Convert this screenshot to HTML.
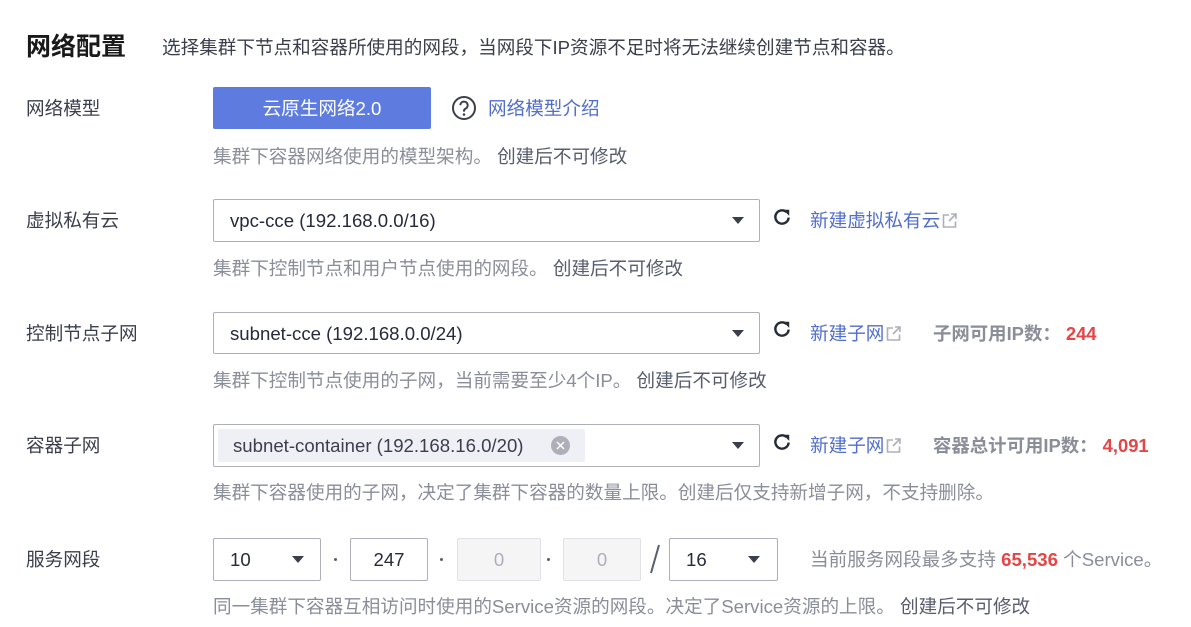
<!DOCTYPE html>
<html><head><meta charset="utf-8"><style>
body{margin:0;width:1191px;height:627px;background:#fff;font-family:"Liberation Sans","Noto Sans CJK SC",sans-serif;color:#252b3a;position:relative;overflow:hidden}
.a{position:absolute;white-space:nowrap}
.lbl{font-size:18.6px;color:#3a3f4b;line-height:24px}
.desc{font-size:18.6px;color:#8a8e99;line-height:24px}
.desc b{font-weight:normal;color:#575d6c}
.box{position:absolute;border:1px solid #adb0b8;border-radius:2px;box-sizing:border-box;background:#fff}
.arr{position:absolute;width:0;height:0;border-left:6px solid transparent;border-right:6px solid transparent;border-top:7px solid #3a3f4b}
.link{font-size:18.6px;color:#526ecc;line-height:24px}
.txt{font-size:18.6px;line-height:24px;color:#252b3a}
.dot{position:absolute;width:3px;height:3px;background:#575d6c;border-radius:50%}
.ext{display:inline-block;vertical-align:-2px;margin-left:1px}
</style></head><body>
<div class="a" style="left:26px;top:32px;font-size:25px;font-weight:bold;color:#191919;line-height:30px">网络配置</div>
<div class="a" style="left:162px;top:36px;font-size:18.6px;color:#3a3f4b;line-height:24px">选择集群下节点和容器所使用的网段，当网段下IP资源不足时将无法继续创建节点和容器。</div>

<div class="a lbl" style="left:26px;top:97px">网络模型</div>
<div class="a" style="left:213px;top:87px;width:218px;height:42px;background:#5e7ce0;border-radius:2px;color:#fff;font-size:18.6px;line-height:43px;text-align:center">云原生网络2.0</div>
<svg class="a" style="left:451px;top:95px" width="26" height="26" viewBox="0 0 26 26"><circle cx="13" cy="13" r="11" fill="none" stroke="#3a3f4b" stroke-width="2"/><path d="M9.3 10.3a3.7 3.7 0 1 1 5.2 3.4c-1 .5-1.5 1.2-1.5 2.3v.6" fill="none" stroke="#3a3f4b" stroke-width="2"/><circle cx="13" cy="19.5" r="1.3" fill="#3a3f4b"/></svg>
<div class="a link" style="left:488px;top:97px">网络模型介绍</div>
<div class="a desc" style="left:213px;top:145px">集群下容器网络使用的模型架构。 <b>创建后不可修改</b></div>

<div class="a lbl" style="left:26px;top:209px">虚拟私有云</div>
<div class="box" style="left:213px;top:199px;width:547px;height:43px"></div>
<div class="a txt" style="left:230px;top:209px">vpc-cce (192.168.0.0/16)</div>
<div class="arr" style="left:732px;top:217px"></div>
<svg class="a" style="left:772px;top:207px" width="20" height="20" viewBox="0 0 18 18"><path d="M15 9.5A6 6 0 1 1 13 4.5" fill="none" stroke="#252b3a" stroke-width="2.2"/><path d="M10 2.5h5.5V8z" fill="#252b3a"/></svg>
<div class="a link" style="left:810px;top:209px">新建虚拟私有云<svg class="ext" width="17" height="17" viewBox="0 0 17 17"><path d="M8 3H2.5v12h12V9.5" fill="none" stroke="#adb0b8" stroke-width="1.6"/><path d="M10 2h5v5M15 2l-7 7" fill="none" stroke="#adb0b8" stroke-width="1.6"/></svg></div>
<div class="a desc" style="left:213px;top:257px">集群下控制节点和用户节点使用的网段。 <b>创建后不可修改</b></div>

<div class="a lbl" style="left:26px;top:322px">控制节点子网</div>
<div class="box" style="left:213px;top:312px;width:547px;height:42px"></div>
<div class="a txt" style="left:230px;top:322px">subnet-cce (192.168.0.0/24)</div>
<div class="arr" style="left:732px;top:330px"></div>
<svg class="a" style="left:772px;top:319px" width="20" height="20" viewBox="0 0 18 18"><path d="M15 9.5A6 6 0 1 1 13 4.5" fill="none" stroke="#252b3a" stroke-width="2.2"/><path d="M10 2.5h5.5V8z" fill="#252b3a"/></svg>
<div class="a link" style="left:810px;top:322px">新建子网<svg class="ext" width="17" height="17" viewBox="0 0 17 17"><path d="M8 3H2.5v12h12V9.5" fill="none" stroke="#adb0b8" stroke-width="1.6"/><path d="M10 2h5v5M15 2l-7 7" fill="none" stroke="#adb0b8" stroke-width="1.6"/></svg></div>
<div class="a" style="left:933px;top:322px;font-size:18.4px;font-weight:bold;color:#8a8e99;line-height:24px">子网可用IP数： <span style="color:#e54545">244</span></div>
<div class="a desc" style="left:213px;top:369px">集群下控制节点使用的子网，当前需要至少4个IP。 <b>创建后不可修改</b></div>

<div class="a lbl" style="left:26px;top:434px">容器子网</div>
<div class="box" style="left:213px;top:424px;width:547px;height:43px"></div>
<div class="a" style="left:218px;top:429px;width:367px;height:33px;background:#eef0f5;border-radius:2px"></div>
<div class="a txt" style="left:233px;top:434px;color:#3a3f4b">subnet-container (192.168.16.0/20)</div>
<svg class="a" style="left:551px;top:436px" width="19" height="19" viewBox="0 0 19 19"><circle cx="9.5" cy="9.5" r="9.5" fill="#adb0b8"/><path d="M6 6l7 7M13 6l-7 7" stroke="#fff" stroke-width="1.5"/></svg>
<div class="arr" style="left:732px;top:442px"></div>
<svg class="a" style="left:772px;top:432px" width="20" height="20" viewBox="0 0 18 18"><path d="M15 9.5A6 6 0 1 1 13 4.5" fill="none" stroke="#252b3a" stroke-width="2.2"/><path d="M10 2.5h5.5V8z" fill="#252b3a"/></svg>
<div class="a link" style="left:810px;top:434px">新建子网<svg class="ext" width="17" height="17" viewBox="0 0 17 17"><path d="M8 3H2.5v12h12V9.5" fill="none" stroke="#adb0b8" stroke-width="1.6"/><path d="M10 2h5v5M15 2l-7 7" fill="none" stroke="#adb0b8" stroke-width="1.6"/></svg></div>
<div class="a" style="left:933px;top:434px;font-size:18.4px;font-weight:bold;color:#8a8e99;line-height:24px">容器总计可用IP数： <span style="color:#e54545">4,091</span></div>
<div class="a desc" style="left:213px;top:481px">集群下容器使用的子网，决定了集群下容器的数量上限。创建后仅支持新增子网，不支持删除。</div>

<div class="a lbl" style="left:26px;top:548px">服务网段</div>
<div class="box" style="left:213px;top:538px;width:108px;height:43px"></div>
<div class="a txt" style="left:230px;top:548px">10</div>
<div class="arr" style="left:292px;top:556px"></div>
<div class="dot" style="left:334px;top:558px"></div>
<div class="box" style="left:350px;top:538px;width:78px;height:43px"></div>
<div class="a txt" style="left:350px;top:548px;width:78px;text-align:center">247</div>
<div class="dot" style="left:440px;top:558px"></div>
<div class="box" style="left:457px;top:538px;width:84px;height:43px;background:#f5f5f6;border-color:#dfe1e6"></div>
<div class="a txt" style="left:457px;top:548px;width:84px;text-align:center;color:#adb0b8">0</div>
<div class="dot" style="left:547px;top:558px"></div>
<div class="box" style="left:563px;top:538px;width:78px;height:43px;background:#f5f5f6;border-color:#dfe1e6"></div>
<div class="a txt" style="left:563px;top:548px;width:78px;text-align:center;color:#adb0b8">0</div>
<svg class="a" style="left:647px;top:542px" width="16" height="34"><path d="M12 3L4 31" stroke="#575d6c" stroke-width="2"/></svg>
<div class="box" style="left:669px;top:538px;width:109px;height:43px"></div>
<div class="a txt" style="left:686px;top:548px">16</div>
<div class="arr" style="left:748px;top:556px"></div>
<div class="a" style="left:810px;top:548px;font-size:18.6px;color:#8a8e99;line-height:24px">当前服务网段最多支持 <span style="color:#e54545;font-weight:bold">65,536</span> 个Service。</div>
<div class="a desc" style="left:213px;top:595px">同一集群下容器互相访问时使用的Service资源的网段。决定了Service资源的上限。 <b>创建后不可修改</b></div>
</body></html>
